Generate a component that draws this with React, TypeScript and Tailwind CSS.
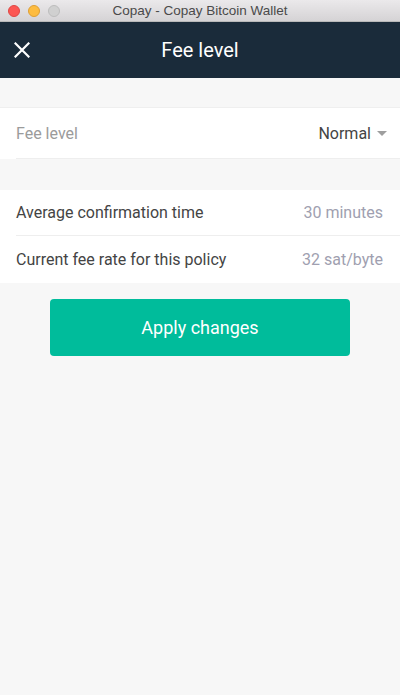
import React from "react";

export default function App() {
  return (
    <div className="w-[400px] h-[695px] bg-[#f7f7f7] flex flex-col overflow-hidden" style={{ fontFamily: "Roboto, 'Noto Sans', sans-serif" }}>
      {/* mac title bar */}
      <div className="relative h-[22px] shrink-0 bg-gradient-to-b from-[#ebe9eb] to-[#d5d3d5] border-b border-[#b9b9b9] flex items-center justify-center">
        <div className="absolute left-[8px] top-[5px] flex gap-[8px]">
          <div className="w-[12px] h-[12px] rounded-full bg-[#fc5753] border border-[#df4744]" />
          <div className="w-[12px] h-[12px] rounded-full bg-[#fdbc40] border border-[#de9f34]" />
          <div className="w-[12px] h-[12px] rounded-full bg-[#d0d0d0] border border-[#bdbdbd]" />
        </div>
        <span className="text-[13.5px] text-[#4a4a4a] pt-[1px]" style={{ fontFamily: "'Liberation Sans', 'Noto Sans', sans-serif" }}>Copay - Copay Bitcoin Wallet</span>
      </div>
      {/* header */}
      <div className="relative h-[56px] shrink-0 bg-[#1a2b3a] flex items-center justify-center">
        <svg className="absolute left-[14px] top-[20px]" width="16" height="16" viewBox="0 0 16 16">
          <path d="M1.5 1.5 L14.5 14.5 M14.5 1.5 L1.5 14.5" stroke="#ffffff" strokeWidth="2.2" strokeLinecap="square" />
        </svg>
        <span className="text-white text-[20px]">Fee level</span>
      </div>
      <div className="h-[29px] shrink-0" />
      <div className="bg-white border-t border-[#efefef]">
        <div className="ml-[16px] h-[51px] border-b border-[#eeeeee] flex items-center justify-between pr-[13px]">
          <span className="text-[16px] text-[#9b9b9b] pt-[1px]">Fee level</span>
          <div className="flex items-center gap-[6px]">
            <span className="text-[16px] text-[#444444] pt-[1px]">Normal</span>
            <svg width="10" height="5" viewBox="0 0 10 5">
              <path d="M0 0 L10 0 L5 5 Z" fill="#9e9e9e" />
            </svg>
          </div>
        </div>
      </div>
      <div className="h-[31px] shrink-0" />
      <div className="bg-white">
        <div className="ml-[16px] h-[46px] border-b border-[#eeeeee] flex items-center justify-between pr-[17px]">
          <span className="text-[16px] text-[#444444] pt-[1px]">Average confirmation time</span>
          <span className="text-[16px] text-[#a09fb0] pt-[1px]">30 minutes</span>
        </div>
        <div className="ml-[16px] h-[47px] flex items-center justify-between pr-[17px]">
          <span className="text-[16px] text-[#444444]">Current fee rate for this policy</span>
          <span className="text-[16px] text-[#a09fb0]">32 sat/byte</span>
        </div>
      </div>
      <div className="flex justify-center pt-[16px]">
        <button className="w-[300px] h-[57px] rounded-[4px] bg-[#00bc9b] text-white text-[18px]">Apply changes</button>
      </div>
    </div>
  );
}
